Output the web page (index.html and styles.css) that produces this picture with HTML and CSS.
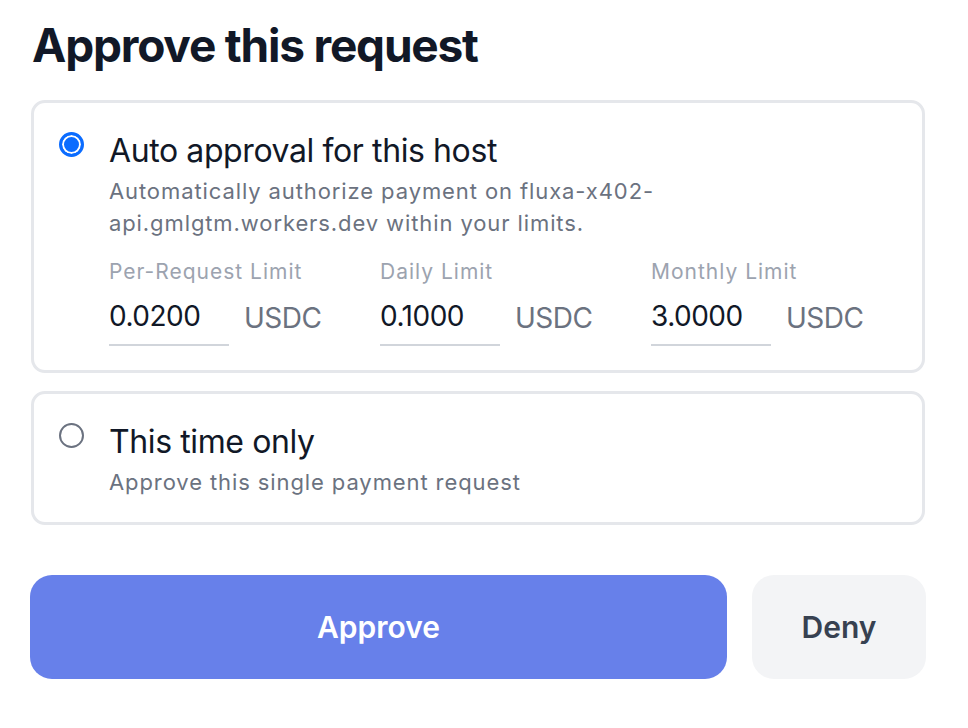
FILE: index.html
```html
<!DOCTYPE html>
<html lang="en">
<head>
<meta charset="utf-8">
<title>Approve this request</title>
<link rel="stylesheet" href="styles.css">
</head>
<body>
<main class="panel">
  <h1 class="heading">Approve this request</h1>

  <div class="option option--selected">
    <span class="radio radio--checked"></span>
    <div class="option-body">
      <div class="option-title">Auto approval for this host</div>
      <div class="option-desc">Automatically authorize payment on fluxa-x402-api.gmlgtm.workers.dev within your limits.</div>
      <div class="limits">
        <div class="limit">
          <div class="limit-label">Per-Request Limit</div>
          <div class="limit-row">
            <span class="limit-input">0.0200</span>
            <span class="limit-unit">USDC</span>
          </div>
        </div>
        <div class="limit">
          <div class="limit-label">Daily Limit</div>
          <div class="limit-row">
            <span class="limit-input">0.1000</span>
            <span class="limit-unit">USDC</span>
          </div>
        </div>
        <div class="limit">
          <div class="limit-label">Monthly Limit</div>
          <div class="limit-row">
            <span class="limit-input">3.0000</span>
            <span class="limit-unit">USDC</span>
          </div>
        </div>
      </div>
    </div>
  </div>

  <div class="option">
    <span class="radio"></span>
    <div class="option-body">
      <div class="option-title">This time only</div>
      <div class="option-desc">Approve this single payment request</div>
    </div>
  </div>

  <div class="actions">
    <button class="btn btn--primary">Approve</button>
    <button class="btn btn--secondary">Deny</button>
  </div>
</main>
</body>
</html>
```

FILE: styles.css
```css
* {
  box-sizing: border-box;
}

html, body {
  margin: 0;
  padding: 0;
  background: #ffffff;
}

body {
  font-family: Inter, "Noto Sans", "Liberation Sans", sans-serif;
  color: #111827;
}

.panel {
  width: 896px;
  margin-left: 30px;
  display: flex;
  flex-direction: column;
}

.heading {
  margin: 17px 0 27px 2px;
  font-size: 46px;
  line-height: 56px;
  font-weight: 700;
  letter-spacing: -1.2px;
  color: #111827;
}

.option {
  margin: 0 1px;
  border: 3px solid #e5e7eb;
  border-radius: 14px;
  padding: 28px 28px 24px 25px;
  display: flex;
  align-items: flex-start;
  gap: 25px;
}

.option + .option {
  margin-top: 18px;
}

.radio {
  flex: none;
  width: 25px;
  height: 25px;
  border-radius: 50%;
  border: 2px solid #6b7280;
  margin-top: 1px;
  background: #fff;
}

.radio--checked {
  border: 3px solid #0b6cff;
  background: #0b6cff;
  box-shadow: inset 0 0 0 2px #ffffff;
}

.option-body {
  flex: 1;
  min-width: 0;
}

.option-title {
  font-size: 32px;
  line-height: 40px;
  letter-spacing: -0.4px;
  color: #111827;
}

.option-desc {
  margin-top: 4px;
  font-size: 22px;
  line-height: 32px;
  color: #6b7280;
  letter-spacing: 0.9px;
  max-width: 600px;
}

.limits {
  margin-top: 19px;
  display: grid;
  grid-template-columns: repeat(3, 1fr);
  column-gap: 28px;
}

.limit-label {
  font-size: 21px;
  line-height: 28px;
  color: #9ca3af;
  letter-spacing: 1px;
}

.limit-row {
  margin-top: 12px;
  display: flex;
  align-items: center;
  gap: 15px;
}

.limit-input {
  width: 120px;
  font-size: 28px;
  line-height: 36px;
  letter-spacing: -0.5px;
  color: #111827;
  padding-bottom: 10px;
  border-bottom: 2px solid #d1d5db;
}

.limit-unit {
  font-size: 28px;
  line-height: 36px;
  letter-spacing: -0.5px;
  color: #6b7280;
  margin-bottom: 8px;
}

.actions {
  margin-top: 50px;
  display: flex;
  gap: 25px;
}

.btn {
  height: 104px;
  border: none;
  border-radius: 22px;
  font-family: inherit;
  font-size: 30px;
  font-weight: 600;
  cursor: pointer;
}

.btn--primary {
  flex: 1;
  background: #6780ea;
  color: #ffffff;
}

.btn--secondary {
  width: 174px;
  background: #f3f4f6;
  color: #374151;
}
```
